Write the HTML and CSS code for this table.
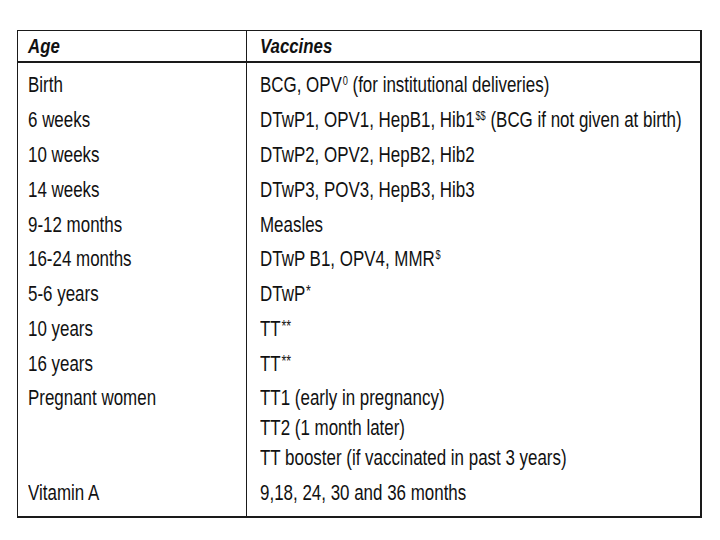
FILE: index.html
```html
<!DOCTYPE html>
<html>
<head>
<meta charset="utf-8">
<link rel="stylesheet" href="styles.css">
</head>
<body>
<table class="sched">
  <colgroup><col class="w1"><col class="w2"></colgroup>
  <thead>
    <tr><th class="c1"><span class="h">Age</span></th><th class="c2"><span class="h">Vaccines</span></th></tr>
  </thead>
  <tbody>
    <tr class="first"><td class="c1"><span class="t">Birth</span></td><td class="c2"><span class="t">BCG, OPV<sup>0</sup> (for institutional deliveries)</span></td></tr>
    <tr><td class="c1"><span class="t">6 weeks</span></td><td class="c2"><span class="t">DTwP1, OPV1, HepB1, Hib1<sup>$$</sup> (BCG if not given at birth)</span></td></tr>
    <tr><td class="c1"><span class="t">10 weeks</span></td><td class="c2"><span class="t">DTwP2, OPV2, HepB2, Hib2</span></td></tr>
    <tr><td class="c1"><span class="t">14 weeks</span></td><td class="c2"><span class="t">DTwP3, POV3, HepB3, Hib3</span></td></tr>
    <tr><td class="c1"><span class="t">9-12 months</span></td><td class="c2"><span class="t">Measles</span></td></tr>
    <tr><td class="c1"><span class="t">16-24 months</span></td><td class="c2"><span class="t">DTwP B1, OPV4, MMR<sup>$</sup></span></td></tr>
    <tr><td class="c1"><span class="t">5-6 years</span></td><td class="c2"><span class="t">DTwP<sup class="ast">*</sup></span></td></tr>
    <tr><td class="c1"><span class="t">10 years</span></td><td class="c2"><span class="t">TT<sup class="ast">**</sup></span></td></tr>
    <tr><td class="c1"><span class="t">16 years</span></td><td class="c2"><span class="t">TT<sup class="ast">**</sup></span></td></tr>
    <tr><td class="c1"><span class="t">Pregnant women</span></td><td class="c2">
      <div class="ln"><span class="t">TT1 (early in pregnancy)</span></div>
      <div class="ln"><span class="t">TT2 (1 month later)</span></div>
      <div class="ln"><span class="t">TT booster (if vaccinated in past 3 years)</span></div>
    </td></tr>
    <tr class="last"><td class="c1"><span class="t">Vitamin A</span></td><td class="c2"><span class="t">9,18, 24, 30 and 36 months</span></td></tr>
  </tbody>
</table>
</body>
</html>
```
FILE: styles.css
```css
html, body {
  margin: 0;
  padding: 0;
  background: #ffffff;
}
body {
  font-family: "Liberation Sans", Arial, sans-serif;
  color: #111111;
}
.sched {
  box-sizing: border-box;
  margin: 30px 0 0 17px;
  width: 685px;
  table-layout: fixed;
  border-collapse: separate;
  border-spacing: 0;
  border-top: 1px solid #1a1a1a;
  border-left: 1px solid #1a1a1a;
  border-right: 2px solid #1a1a1a;
  border-bottom: 2px solid #1a1a1a;
}
.w1 { width: 229px; }
.sched th,
.sched td {
  text-align: left;
  vertical-align: top;
  white-space: nowrap;
  overflow: hidden;
}
.sched th {
  height: 30px;
  padding: 0;
  font-size: 21px;
  line-height: 30px;
  font-weight: bold;
  font-style: italic;
  border-bottom: 2px solid #1a1a1a;
}
.sched td {
  padding: 2.4px 0;
  font-size: 22px;
  line-height: 30px;
}
.sched .c1 {
  border-right: 1px solid #1a1a1a;
  padding-left: 10px;
}
.sched .c2 {
  padding-left: 13px;
}
.sched tr.first td { padding-top: 7.4px; }
.sched tr.last td { padding-bottom: 7.6px; }
.h {
  display: inline-block;
  transform: scaleX(0.8);
  transform-origin: 0 50%;
}
.t {
  display: inline-block;
  transform: scaleX(0.77);
  transform-origin: 0 50%;
  white-space: nowrap;
}
.t sup {
  font-size: 12px;
  line-height: 0;
  vertical-align: 7px;
  margin-left: 1px;
}
.t sup.ast {
  font-size: 16px;
  vertical-align: 4px;
}
.ln {
  height: 30px;
}
```
